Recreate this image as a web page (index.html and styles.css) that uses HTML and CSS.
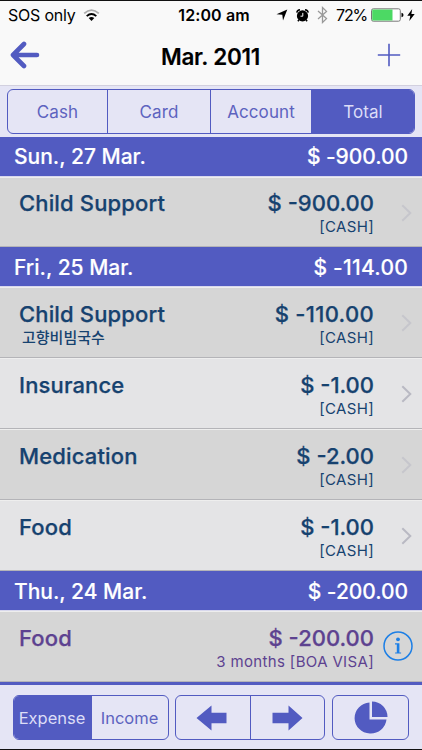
FILE: index.html
```html
<!DOCTYPE html>
<html lang="en">
<head>
<meta charset="utf-8">
<title>Mar. 2011</title>
<link rel="stylesheet" href="styles.css">
</head>
<body>
<div class="app">
  <div class="status">
    <div class="carrier"><span class="sos">SOS only</span>
      <svg width="17" height="13" viewBox="0 0 17 13"><path d="M1.2 4.4Q8.5-2.2 15.8 4.4" fill="none" stroke="#aaa" stroke-width="1.8"/><path d="M3.7 7.1Q8.5 2.9 13.3 7.1" fill="none" stroke="#000" stroke-width="1.9"/><path d="M5.7 9.1Q8.5 6.7 11.3 9.1L8.5 12Z"/></svg>
    </div>
    <span class="time">12:00 am</span>
    <div class="indicators">
      <svg width="12" height="12" viewBox="0 0 12 12"><path d="M11.3.5 7 11.5 6.3 5.7.5 5.2Z"/></svg>
      <svg class="alarm" width="13" height="13" viewBox="0 0 13 13"><circle cx="6.5" cy="6.9" r="5.6"/><path d="M.8 3.7Q1.2 1 4 .8M12.2 3.7Q11.8 1 9 .8M3 10.8 1.9 12.2M10 10.8l1.1 1.4" fill="none" stroke="#000" stroke-width="1.5"/><path d="M6.8 3.9v3.3H4.5" fill="none" stroke="#f9f9f9" stroke-width="1"/></svg>
      <svg class="bt" width="11" height="18" viewBox="0 0 11 18"><path d="M1 5 9.5 12.6 5.5 16.5V1.5L9.5 5.4 1 13" fill="none" stroke="#999" stroke-width="1.3"/></svg>
      <span class="pct">72%</span>
      <svg class="battery" width="33" height="14" viewBox="0 0 33 14"><rect x=".5" y=".8" width="28.8" height="12.4" rx="1.8" fill="#fff" stroke="#777"/><path d="M1.2 1.5h20.3v11H1.2z" fill="#4cd964"/><path d="M30.5 4.7q2 .6 2 2.3t-2 2.3z"/></svg>
      <svg width="8" height="12" viewBox="0 0 8 12"><path d="M5.2 0 .3 6.7h3L2.3 12 7.7 5H4.4Z"/></svg>
    </div>
  </div>
  <div class="nav">
    <svg class="back" width="30" height="28" viewBox="0 0 30 28"><path d="M14 3 3 14l11 11M3.5 14H27" fill="none" stroke="#525bc1" stroke-width="4.6" stroke-linecap="round" stroke-linejoin="round"/></svg>
    <span class="title">Mar. 2011</span>
    <svg class="plus" width="24" height="24" viewBox="0 0 24 24"><path d="M12 .8v22.4M.8 12h22.4" stroke="#525bc1" stroke-width="1.6"/></svg>
  </div>
  <div class="tabs">
    <div class="seg filter"><span>Cash</span><span>Card</span><span>Account</span><span class="on">Total</span></div>
  </div>

  <div class="day top"><span>Sun., 27 Mar.</span><span class="sum">$ -900.00</span></div>
  <div class="row dark first"><div class="left"><b>Child Support</b></div><div class="right"><b>$ -900.00</b><small>[CASH]</small></div><svg class="chev" width="11" height="18" viewBox="0 0 11 18"><path d="m1.3 1.2 8 7.8-8 7.8"/></svg></div>
  <div class="day"><span>Fri., 25 Mar.</span><span class="sum wide">$ -114.00</span></div>
  <div class="row dark"><div class="left"><b>Child Support</b><small class="memo" lang="ko">고향비빔국수</small></div><div class="right"><b class="wide">$ -110.00</b><small>[CASH]</small></div><svg class="chev" width="11" height="18" viewBox="0 0 11 18"><path d="m1.3 1.2 8 7.8-8 7.8"/></svg></div>
  <div class="row"><div class="left"><b>Insurance</b></div><div class="right"><b>$ -1.00</b><small>[CASH]</small></div><svg class="chev" width="11" height="18" viewBox="0 0 11 18"><path d="m1.3 1.2 8 7.8-8 7.8"/></svg></div>
  <div class="row dark"><div class="left"><b>Medication</b></div><div class="right"><b>$ -2.00</b><small>[CASH]</small></div><svg class="chev" width="11" height="18" viewBox="0 0 11 18"><path d="m1.3 1.2 8 7.8-8 7.8"/></svg></div>
  <div class="row"><div class="left"><b>Food</b></div><div class="right"><b>$ -1.00</b><small>[CASH]</small></div><svg class="chev" width="11" height="18" viewBox="0 0 11 18"><path d="m1.3 1.2 8 7.8-8 7.8"/></svg></div>
  <div class="day"><span>Thu., 24 Mar.</span><span class="sum">$ -200.00</span></div>
  <div class="row dark visa"><div class="left"><b>Food</b></div><div class="right"><b>$ -200.00</b><small>3 months [BOA VISA]</small></div>
    <svg class="info" width="30" height="30" viewBox="0 0 30 30"><circle cx="15" cy="15" r="14" fill="none" stroke="#1c7fe6" stroke-width="1.5"/><circle cx="15" cy="8.3" r="1.9" fill="#1c7fe6"/><path d="M12 12.2h4.4v9.2h1.7v1.2h-6v-1.2h1.7v-8H12z" fill="#1c7fe6"/></svg></div>

  <div class="bottom">
    <div class="seg kind"><span class="on">Expense</span><span>Income</span></div>
    <div class="seg move">
      <span><svg width="31" height="26" viewBox="0 0 31 26"><path d="M.5 13 15.5.5v7.2h15v10.6h-15v7.2Z"/></svg></span>
      <span><svg width="31" height="26" viewBox="0 0 31 26"><path d="M30.5 13 16.5.5v7.2H.5v10.6h16v7.2Z"/></svg></span>
    </div>
    <div class="seg chart"><span><svg width="34" height="34" viewBox="0 0 34 34"><path d="M15.5 1.5V18.5H32.5A16 15.5 0 1 1 15.5 1.5Z"/><path d="M18 .5A15.5 15.5 0 0 1 33.5 16H18Z"/></svg></span></div>
  </div>
</div>
</body>
</html>
```
FILE: styles.css
```css
* { box-sizing: border-box; }
body { margin: 0; font-family: Inter, "Noto Sans CJK KR", sans-serif; background: #e5e5f5; }
.app { width: 422px; height: 750px; overflow: hidden; border-top: 1px solid #111; border-bottom: 1px solid #111; display: flex; flex-direction: column; }
svg { display: block; flex: none; }
span, b, small { white-space: nowrap; }

.status { height: 28px; background: #f9f9f9; display: grid; grid-template-columns: 1fr auto 1fr; align-items: center; padding: 0 7px 0 8px; font-size: 16px; line-height: 28px; }
.carrier { display: flex; align-items: center; gap: 7px; }
.sos { letter-spacing: -.2px; }
.time { font-weight: 600; letter-spacing: .1px; margin-left: 5px; }
.indicators { display: flex; align-items: center; justify-content: flex-end; }
.alarm { margin-left: 8px; }
.bt { margin-left: 8px; }
.pct { margin: 0 4px 0 8px; letter-spacing: -1.2px; }
.battery { margin-right: 3px; }

.nav { height: 56px; background: #f9f9f9; display: grid; grid-template-columns: 1fr auto 1fr; align-items: center; padding: 0 21px 4px 10px; }
.title { font-size: 22.5px; font-weight: 600; letter-spacing: -.25px; line-height: 28px; margin-left: 10px; padding-top: 3px; }
.plus { justify-self: end; }

.tabs { height: 52px; border-top: 1px solid #d2d0df; background: #e5e5f5; padding: 3px 7px 0; }
.seg { display: grid; height: 45px; border: 1.5px solid #525bc1; border-radius: 6px; overflow: hidden; color: #5d63bf; font-size: 17px; }
.seg span { display: flex; align-items: center; justify-content: center; border-left: 1px solid #525bc1; }
.seg span:first-child { border-left: 0; }
.seg .on { background: #525bc1; color: #dcddf7; }
.filter { grid-template-columns: 99px 103px 101px 1fr; letter-spacing: .1px; }

.day { height: 40px; flex: none; background: #525bc1; border-bottom: 1px solid #d8d8ed; color: #fff; display: flex; justify-content: space-between; padding: 0 14px; font-size: 21px; font-weight: 500; line-height: 41px; letter-spacing: 0; }
.day.top { line-height: 40px; }
.day .sum { letter-spacing: -.05px; }
.day .wide { letter-spacing: .25px; }

.row { height: 71px; flex: none; display: flex; align-items: flex-start; background: #e4e4e6; color: #16426f; border-top: 1px solid #eee; border-bottom: 1px solid #b4b4b8; padding: 12px 10px 0 19px; }
.first { height: 70px; padding-top: 11px; }
.dark { background: #d6d6d6; }
.left, .right { display: flex; flex-direction: column; }
.right { margin-left: auto; align-items: flex-end; }
.row b { font-size: 22px; line-height: 29px; font-weight: 500; letter-spacing: .15px; -webkit-text-stroke: .25px currentColor; }
.day, .title { -webkit-text-stroke: .15px currentColor; }
.row .right b { letter-spacing: 0; }
.row .right .wide { letter-spacing: .3px; }
.row small { font-size: 15px; line-height: 18px; letter-spacing: .35px; }
.row .memo { font-size: 15px; margin-left: 3px; letter-spacing: 0; font-weight: 500; }
.chev { margin: 14px 0 0 27px; fill: none; stroke: #b9b9c3; stroke-width: 2; }
.first .chev { margin-top: 15px; }
.dark .chev { stroke: #c6c6cc; }
.visa { color: #5d4290; padding-right: 9px; }
.info { margin: 7px 0 0 9px; }

.bottom { flex: 1; border-top: 3px solid #525bc1; background: #e5e5f5; display: flex; padding: 10px 0 0 13px; }
.kind { width: 156px; grid-template-columns: 77px 1fr; }
.move { width: 150px; margin-left: 6px; grid-template-columns: 1fr 1fr; }
.chart { width: 77px; margin-left: 7px; }
.seg svg { fill: #525bc1; }
.kind { font-size: 16.5px; }
.kind span { padding-right: 1px; }
.move span:first-child { padding-right: 3px; }
```
